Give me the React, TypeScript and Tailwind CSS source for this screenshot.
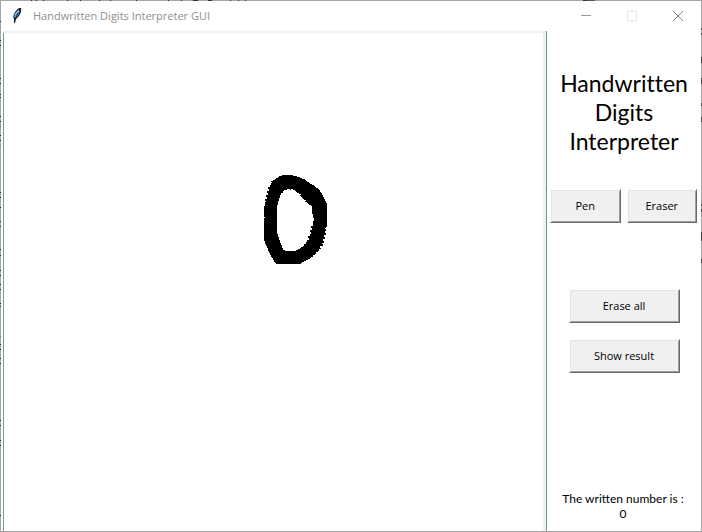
import React from "react";

const bevel =
  "flex items-center justify-center h-[34px] bg-[#f0f0f0] text-[11px] text-black border-t border-l border-white border-r border-b border-r-[#696969] border-b-[#696969] shadow-[inset_1px_1px_0_#e3e3e3,inset_-1px_-1px_0_#a0a0a0] font-['Open_Sans','Noto_Sans',sans-serif]";

// Bits of the desktop that show through the translucent window frame.
const leftSpecks = [21, 40, 45, 78, 83, 94, 97, 116, 121, 135, 140, 192, 197, 207, 221, 226, 249, 255, 270, 275, 284, 289, 303, 306, 344, 349, 358, 363, 420, 425, 440, 445, 515];
const leftRedSpecks = [126, 145, 336];
const rightSpecks = [[28, 2], [33, 2], [57, 6], [78, 6], [103, 3], [117, 5], [204, 2], [209, 3], [232, 9], [259, 4]];
const topSpecks = [[31, 1], [36, 1], [43, 1], [67, 1], [80, 1], [99, 1], [110, 1], [136, 1], [168, 1], [181, 1], [193, 5], [208, 4], [230, 1], [238, 1], [245, 1], [583, 4]];

function FrameSpecks() {
  return (
    <>
      <svg className="pointer-events-none absolute -top-px -left-px" width="600" height="532" shapeRendering="crispEdges" aria-hidden="true">
        {leftSpecks.map((y) => (
          <rect key={y} x="0" y={y} width="1" height="1" fill="#222" />
        ))}
        {leftRedSpecks.map((y) => (
          <rect key={y} x="0" y={y} width="1" height="1" fill="#c8583c" />
        ))}
        {topSpecks.map(([x, w]) => (
          <rect key={x} x={x} y="0" width={w} height="1" fill="#333" />
        ))}
        <rect x="587" y="0" width="8" height="1" fill="#4d5468" />
      </svg>
      <svg className="pointer-events-none absolute -top-px -right-px" width="1" height="532" shapeRendering="crispEdges" aria-hidden="true">
        {rightSpecks.map(([y, h]) => (
          <rect key={y} x="0" y={y} width="1" height={h} fill="#444" />
        ))}
      </svg>
    </>
  );
}

function Feather() {
  return (
    <svg width="16" height="18" viewBox="0 0 16 18" aria-hidden="true">
      <path d="M5 12C3 9 6 4 10 1H12C13 5 10 10 7 12L6 16H5Z" fill="#151b24" />
      <path d="M5 10C5 7 7 4 10 3C11 6 9 9 7 11Z" fill="#4f8fd8" />
      <path d="M6 13L9 6" stroke="#15263c" strokeWidth="1" />
      <path d="M6 8L10 3" stroke="#a8d0fa" strokeWidth="1" />
    </svg>
  );
}

function TitleBar() {
  return (
    <header className="flex h-[30px] shrink-0 items-center pl-2">
      <Feather />
      <h1 className="ml-2 flex-1 font-['Open_Sans','Noto_Sans',sans-serif] text-[11px] text-[#8f8f8f]">
        Handwritten Digits Interpreter GUI
      </h1>
      <button aria-label="Minimize" className="flex h-full w-[46px] items-center justify-center">
        <svg width="10" height="10" shapeRendering="crispEdges"><path d="M0 4.500H10" stroke="#999" /></svg>
      </button>
      <button aria-label="Maximize" disabled className="flex h-full w-[46px] items-center justify-center">
        <svg width="10" height="10" shapeRendering="crispEdges"><rect x=".5" y=".5" width="9" height="9" fill="none" stroke="#e6e6e6" /></svg>
      </button>
      <button aria-label="Close" className="flex h-full w-[46px] items-center justify-center">
        <svg width="10" height="10"><path d="M0 0L10 10M10 0L0 10" stroke="#888" /></svg>
      </button>
    </header>
  );
}

export default function App() {
  return (
    <div className="relative flex min-h-screen flex-col border border-[#a5a5a5] bg-white">
      <FrameSpecks />
      <TitleBar />
      <div className="flex flex-1">
        <main className="ml-[2px] flex flex-1 border-t-2 border-r-[3px] border-[#f0f0f0]">
          <div className="flex-1 border-l border-[#5f9ea0] pt-[142px] pl-[260px]">
            <svg width="64" height="90" viewBox="0 0 64 90" role="img" aria-label="Drawn digit">
              <path
                fillRule="evenodd"
                fill="#000"
                shapeRendering="crispEdges"
                d="M18 0H29V1H33V2H36V3H38V4H41V5H42V6H43V7H45V8H46V9H48V10H50V11H51V12H52V13H54V14H55V15H56V17H57V18H58V20H59V22H60V24H61V26H62V28H63V52H62V53H61V54H62V56H61V58H62V60H60V62H61V64H59V66H60V68H58V69H59V71H56V73H57V74H55V76H54V77H52V79H51V80H49V82H47V83H46V84H44V85H42V86H40V87H38V88H37V89H12V88H11V87H10V85H9V83H8V82H7V80H6V78H5V76H4V73H3V71H2V69H1V66H0V43H1V42H0V31H1V27H2V26H1V24H3V22H2V20H4V18H3V16H5V14H4V12H6V10H7V8H8V7H7V6H9V5H11V4H12V3H14V2H15V1H18ZM23 14V15H20V16H19V18H17V20H16V23H15V26H14V30H13V59H14V62H15V65H16V68H17V70H18V73H19V75H21V76H32V75H34V74H36V73H37V72H39V71H40V69H42V67H43V65H45V63H44V61H46V59H47V57H46V55H48V53H47V51H49V46H50V43H49V39H48V31H47V30H45V29H44V28H43V27H41V26H42V25H40V24H39V23H38V22H37V21H36V20H37V19H35V18H33V17H32V16H31V15H29V14H27V15H26V14Z"
              />
            </svg>
          </div>
        </main>
        <aside className="flex w-[155px] shrink-0 flex-col items-center border-l border-[#5f9ea0] bg-white">
          <h2 className="mt-[38px] text-center font-['Lato','Open_Sans',sans-serif] text-[23px] leading-[29px] text-black [font-variant-ligatures:none]">
            Handwritten
            <br />
            Digits
            <br />
            Interpreter
          </h2>
          <div className="mt-[33px] flex w-full gap-[6px] pr-1 pl-[3px]">
            <button className={`${bevel} flex-1`}>Pen</button>
            <button className={`${bevel} flex-1`}>Eraser</button>
          </div>
          <div className="mt-[66px] flex flex-col gap-4">
            <button className={`${bevel} w-[111px]`}>Erase all</button>
            <button className={`${bevel} w-[111px]`}>Show result</button>
          </div>
          <p className="mt-auto pt-4 pr-[2px] pb-[10px] text-center font-['Lato','Open_Sans',sans-serif] text-xs leading-[15px] text-black">
            The written number is :
            <br />0
          </p>
        </aside>
      </div>
    </div>
  );
}
